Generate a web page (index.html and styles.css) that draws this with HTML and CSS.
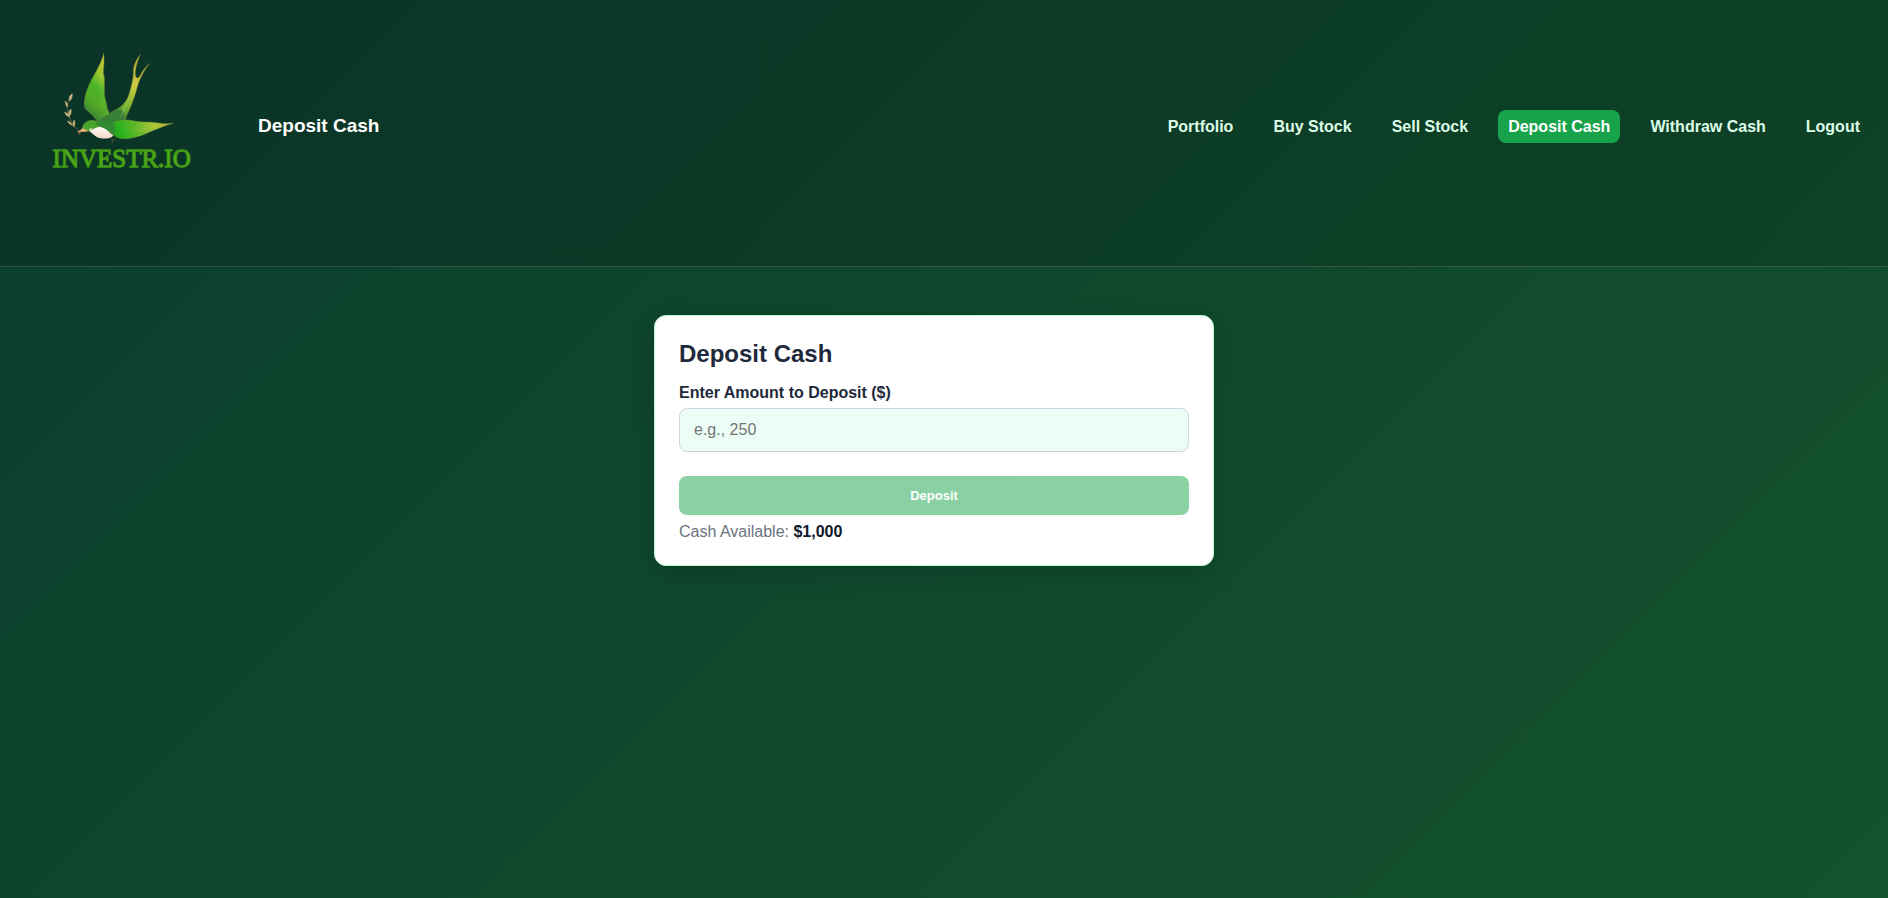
FILE: index.html
```html
<!DOCTYPE html>
<html lang="en">
<head>
<meta charset="utf-8">
<meta name="viewport" content="width=device-width, initial-scale=1">
<title>Deposit Cash - Investr.io</title>
<link rel="stylesheet" href="styles.css">
</head>
<body>
<header class="site-header">
  <div class="brand">
    <svg class="logo" viewBox="54 60 600 636" role="img" aria-label="Investr.io">
      <defs>
        <linearGradient id="wing" x1="0.7" y1="0" x2="0.4" y2="1">
          <stop offset="0" stop-color="#c9c838"/><stop offset="0.3" stop-color="#9bc42f"/><stop offset="0.5" stop-color="#48b526"/><stop offset="0.75" stop-color="#55a929"/><stop offset="1" stop-color="#2f7d36"/>
        </linearGradient>
        <linearGradient id="tail" x1="0.7" y1="0" x2="0.2" y2="1">
          <stop offset="0" stop-color="#bcae38"/><stop offset="0.35" stop-color="#cccb43"/><stop offset="0.65" stop-color="#71b12f"/><stop offset="0.85" stop-color="#3b8135"/><stop offset="1" stop-color="#2b6b31"/>
        </linearGradient>
        <linearGradient id="body" x1="0" y1="0.5" x2="1" y2="0.4">
          <stop offset="0" stop-color="#2f8a31"/><stop offset="0.22" stop-color="#29b41c"/><stop offset="0.48" stop-color="#64b62b"/><stop offset="0.75" stop-color="#abc636"/><stop offset="1" stop-color="#c9a53c"/>
        </linearGradient>
        <linearGradient id="belly" x1="0" y1="0" x2="0" y2="1">
          <stop offset="0" stop-color="#fffaf4"/><stop offset="1" stop-color="#f3d9c8"/>
        </linearGradient>
      </defs>
      <g fill="none" stroke="#8f7a56" stroke-width="2" stroke-linecap="round">
        <path d="M238 394C222 380 213 371 209 354C203 337 198 326 204 309C206 299 212 292 215 283"/>
      </g>
      <g fill="#c5b078" stroke="#c5b078" stroke-width="1.5">
        <path d="M217 281Q203 289 209 303Q218 295 217 281Z"/>
        <path d="M195 303Q198 320 202 321Q206 311 195 303Z"/>
        <path d="M213 327Q203 334 206 350Q216 343 213 327Z"/>
        <path d="M194 336Q196 348 207 350Q205 340 194 336Z"/>
        <path d="M202 363Q206 373 217 376Q213 365 202 363Z"/>
        <path d="M223 360Q215 368 221 381Q228 373 223 360Z"/>
      </g>
      <path fill="url(#tail)" stroke="#71792d" stroke-width="1.5" d="M294 369C307 353 328 339 350 328C366 319 379 306 387 283C396 254 401 227 400 213C401 192 411 177 421 163C411 190 403 213 407 229C411 239 417 234 423 222C431 209 438 199 449 190C435 208 424 228 417 245C411 262 409 276 402 294C394 319 383 338 374 363L319 379Z"/>
      <path fill="url(#wing)" stroke="#758238" stroke-width="1.5" d="M311 160C314 185 311 200 310 218C317 241 311 265 314 288C316 300 322 317 322 327C327 334 328 339 327 345L303 366Q298 370 293 366L287 357C279 344 265 337 256 326C250 316 253 295 260 273C269 245 285 222 294 203C302 188 308 174 311 160Z"/>
      <path fill="#357f37" d="M294 368C308 347 333 343 350 330C368 326 382 338 374 363L339 390L309 380Z"/>
      <path fill="url(#body)" stroke="#759c38" stroke-width="1.5" d="M314 379C334 368 356 362 375 360C392 359 410 366 430 366C460 365 489 374 518 370C492 378 468 388 444 398C418 410 392 416 368 416C345 414 335 402 314 379Z"/>
      <path fill="#4ba52d" stroke="#5f832e" stroke-width="1.5" d="M247 386C248 371 260 362 275 361C291 361 295 369 310 379L286 387L266 394L252 391Z"/>
      <path fill="#2f8a31" d="M293 367L340 362L345 400L320 392L300 382L284 372Z"/>
      <path fill="url(#belly)" d="M266 391C280 390 286 381 300 380C317 384 330 397 340 407C333 415 315 417 302 415C285 412 277 400 266 391Z"/>
      <path fill="#e7b27a" d="M248 385L232 396L252 396L266 393Z"/>
      <path fill="#87603e" d="M232 396L249 394L243 397L239 404Z"/>
      <path fill="#f8f7ca" d="M267 388Q271 383 277 386Q274 390 267 388Z"/>
      <path fill="none" stroke="#5b6247" stroke-width="2" d="M333 415L338 420L334 427M340 415Q341 422 347 420M338 420L339 429"/>
      <g fill="none" stroke="#c5d65b" stroke-width="1.3" opacity="0.65">
        <path d="M308 207L295 250M309 229L296 275M311 250L300 294M312 275L302 313M314 299L306 326"/>
        <path d="M394 271L385 299M389 286L378 322M382 305L367 345M374 318L360 353M370 326L374 356"/>
        <path d="M486 374L447 370M473 379L432 377M458 387L416 384M444 393L398 391"/>
      </g>
      <text class="logo-text" x="365" y="501" text-anchor="middle">INVESTR.IO</text>
    </svg>
    <h1 class="page-title">Deposit Cash</h1>
  </div>
  <nav class="site-nav" aria-label="Main">
    <a class="nav-link" href="#portfolio">Portfolio</a>
    <a class="nav-link" href="#buy">Buy Stock</a>
    <a class="nav-link" href="#sell">Sell Stock</a>
    <a class="nav-link active" href="#deposit" aria-current="page">Deposit Cash</a>
    <a class="nav-link" href="#withdraw">Withdraw Cash</a>
    <a class="nav-link" href="#logout">Logout</a>
  </nav>
</header>
<main class="content">
  <form class="card">
    <h2 class="card-title">Deposit Cash</h2>
    <label class="field-label" for="amount">Enter Amount to Deposit ($)</label>
    <input class="field-input" id="amount" type="text" inputmode="decimal" placeholder="e.g., 250">
    <button class="submit" type="submit" disabled>Deposit</button>
    <p class="balance">Cash Available: <strong class="balance-value">$1,000</strong></p>
  </form>
</main>
</body>
</html>
```
FILE: styles.css
```css
* {
  box-sizing: border-box;
}

body {
  margin: 0;
  min-height: 100vh;
  font-family: "Liberation Sans", Arial, sans-serif;
  font-size: 16px;
  line-height: 18px;
  color: #0f172a;
  background: linear-gradient(135deg, #0b3d2e, #14532d);
}

.site-header {
  display: flex;
  align-items: center;
  justify-content: space-between;
  flex-wrap: wrap;
  padding: 20px 18px 34px;
  background: rgba(0, 0, 0, 0.15);
  border-bottom: 1px solid rgba(255, 255, 255, 0.15);
}

.brand {
  display: flex;
  align-items: center;
  gap: 40px;
}

.logo {
  display: block;
  width: 200px;
  height: 212px;
}

.logo-text {
  font-family: "Liberation Serif", "Times New Roman", serif;
  font-size: 75px;
  fill: #55b41f;
  stroke: #439a14;
  stroke-width: 4px;
}

.page-title {
  margin: 0;
  font-size: 19px;
  font-weight: 700;
  line-height: 20px;
  color: #ffffff;
}

.site-nav {
  display: flex;
  flex-wrap: wrap;
  gap: 20px;
}

.nav-link {
  padding: 8px 10px;
  border-radius: 8px;
  font-weight: 700;
  line-height: 17px;
  color: #dcfce7;
  text-decoration: none;
}

.nav-link.active {
  color: #ffffff;
  background: #16a34a;
}

.content {
  display: flex;
  justify-content: center;
  padding: 48px 20px 48px 0;
}

.card {
  display: flex;
  flex-direction: column;
  width: 100%;
  max-width: 560px;
  padding: 24px;
  border: 1px solid #bbf7d0;
  border-radius: 12px;
  background: #ffffff;
  box-shadow: 0 8px 24px rgba(0, 0, 0, 0.15);
}

.card-title {
  margin: 0 0 16px;
  font-size: 24px;
  line-height: 28px;
  color: #1e293b;
}

.field-label {
  margin-bottom: 6px;
  font-weight: 700;
  color: #1e293b;
}

.field-input {
  height: 44px;
  margin-bottom: 24px;
  padding: 0 14px;
  border: 1px solid #cbd5e1;
  border-radius: 8px;
  font: inherit;
  color: inherit;
  background: #ecfdf5;
}

.field-input::placeholder {
  color: #757575;
}

.submit {
  height: 39px;
  border: 0;
  border-radius: 8px;
  font-family: inherit;
  font-size: 13px;
  font-weight: 700;
  color: #ffffff;
  background: #16a34a;
  opacity: 0.5;
}

.balance {
  margin: 8px 0 0;
  color: #6b7280;
}

.balance-value {
  color: #0f172a;
}
```
